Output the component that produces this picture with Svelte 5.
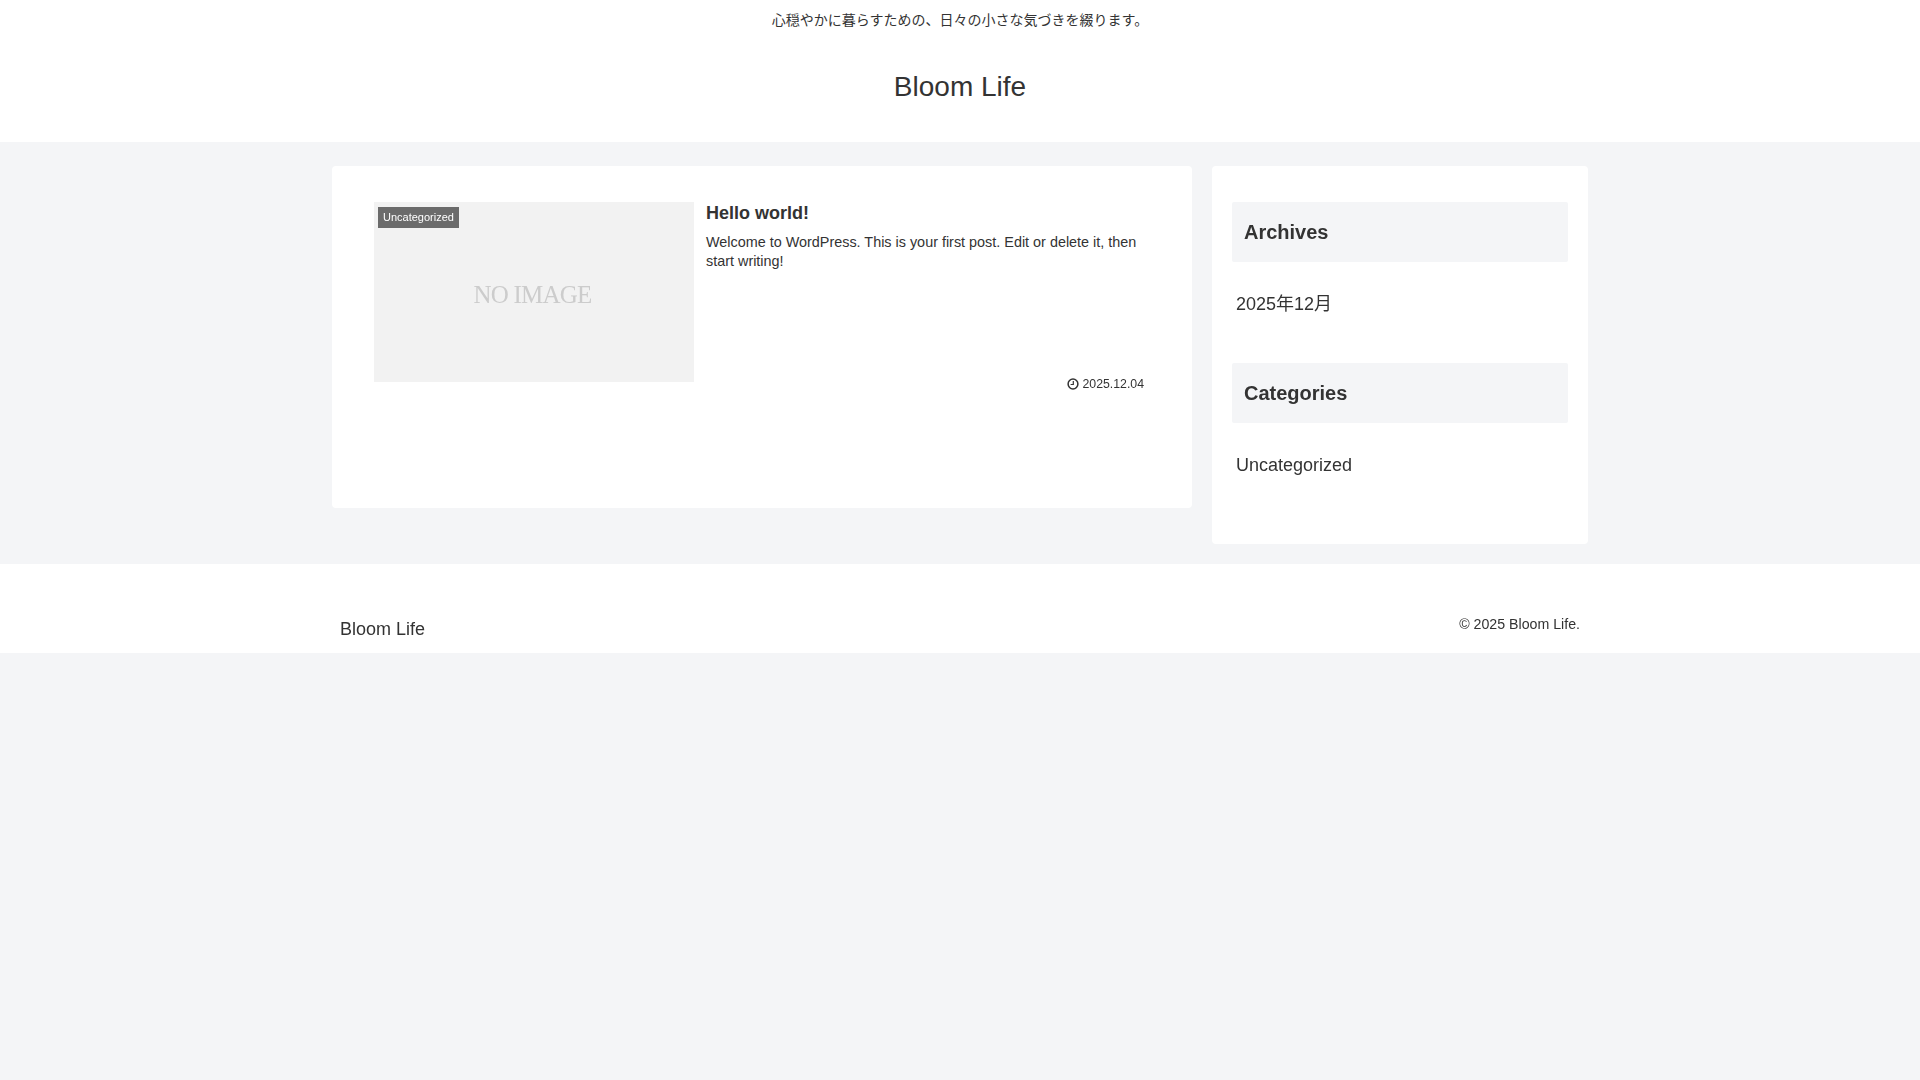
<script>
  const widgets = [
    { title: 'Archives', link: '2025年12月' },
    { title: 'Categories', link: 'Uncategorized' }
  ];
</script>

<div class="page">
  <header class="site-header">
    <p class="tagline">心穏やかに暮らすための、日々の小さな気づきを綴ります。</p>
    <h1 class="site-title">Bloom Life</h1>
  </header>

  <div class="content">
    <main class="main">
      <article class="card">
        <div class="thumb">
          <span class="cat-label">Uncategorized</span>
          <span class="no-image">NO IMAGE</span>
        </div>
        <div class="card-body">
          <h2 class="card-title">Hello world!</h2>
          <p class="snippet">Welcome to WordPress. This is your first post. Edit or delete it, then start writing!</p>
          <div class="post-date">
            <svg class="clock" viewBox="0 0 12 12" width="12" height="12" aria-hidden="true">
              <circle cx="6" cy="6" r="4.9" fill="none" stroke="#333" stroke-width="1.5" />
              <path d="M6.3 3v3.5H3.6" fill="none" stroke="#333" stroke-width="1.2" />
            </svg>
            <span>2025.12.04</span>
          </div>
        </div>
      </article>
    </main>

    <aside class="sidebar">
      {#each widgets as w}
        <section class="widget">
          <h3 class="widget-title">{w.title}</h3>
          <a class="widget-link" href="#top">{w.link}</a>
        </section>
      {/each}
    </aside>
  </div>

  <footer class="site-footer">
    <span class="footer-name">Bloom Life</span>
    <span class="copyright">© 2025 Bloom Life.</span>
  </footer>
</div>

<style>
  :global(body) {
    margin: 0;
    background: #f4f5f7;
  }

  .page {
    min-height: 100vh;
    color: #333;
    font-family: "Liberation Sans", "Noto Sans CJK JP", sans-serif;
    opacity: 0.999;
  }

  .site-header {
    height: 142px;
    background: #fff;
    text-align: center;
  }

  .tagline {
    margin: 0;
    padding-top: 8px;
    font-size: 14px;
    line-height: 24px;
  }

  .site-title {
    margin: 0;
    padding-top: 35px;
    font-size: 28px;
    font-weight: 400;
    line-height: 40px;
  }

  .content {
    display: flex;
    align-items: flex-start;
    gap: 20px;
    width: 1256px;
    margin: 0 auto;
    padding: 24px 0 20px;
  }

  .main {
    box-sizing: border-box;
    width: 860px;
    height: 342px;
    padding: 36px 48px 0 42px;
    background: #fff;
    border-radius: 4px;
  }

  .card {
    display: flex;
    gap: 12px;
    height: 190px;
  }

  .thumb {
    position: relative;
    display: flex;
    flex: none;
    align-items: center;
    justify-content: center;
    width: 320px;
    height: 180px;
    background: #f2f2f2;
  }

  .cat-label {
    position: absolute;
    top: 5px;
    left: 4px;
    padding: 0 5px;
    background: #6b6b6b;
    color: #fff;
    font-size: 11px;
    line-height: 21px;
  }

  .no-image {
    margin: 6px 3px 0 0;
    color: #ccc;
    font-family: "Liberation Serif", serif;
    font-size: 25px;
    letter-spacing: -0.8px;
  }

  .card-body {
    display: flex;
    flex: 1;
    flex-direction: column;
  }

  .card-title {
    margin: 0;
    font-size: 18px;
    font-weight: 700;
    line-height: 22px;
  }

  .snippet {
    margin: 9px 0 0;
    font-size: 14.4px;
    line-height: 19px;
  }

  .post-date {
    display: flex;
    align-items: center;
    justify-content: flex-end;
    gap: 3px;
    margin-top: auto;
    font-size: 12.3px;
    line-height: 16px;
  }

  .sidebar {
    box-sizing: border-box;
    width: 376px;
    height: 378px;
    padding: 36px 20px 0;
    background: #fff;
    border-radius: 4px;
  }

  .widget {
    height: 161px;
  }

  .widget-title {
    height: 60px;
    margin: 0;
    padding-left: 12px;
    background: #f4f5f7;
    border-radius: 2px;
    font-size: 20px;
    font-weight: 700;
    line-height: 60px;
  }

  .widget-link {
    display: block;
    margin-top: 27px;
    padding-left: 4px;
    color: #333;
    font-size: 18px;
    line-height: 30px;
    text-decoration: none;
  }

  .site-footer {
    display: flex;
    justify-content: space-between;
    height: 89px;
    padding: 0 calc(50% - 620px);
    background: #fff;
  }

  .footer-name {
    padding-top: 51px;
    font-size: 18px;
    line-height: 28px;
  }

  .copyright {
    padding-top: 50px;
    font-size: 14.2px;
    line-height: 20px;
  }
</style>
